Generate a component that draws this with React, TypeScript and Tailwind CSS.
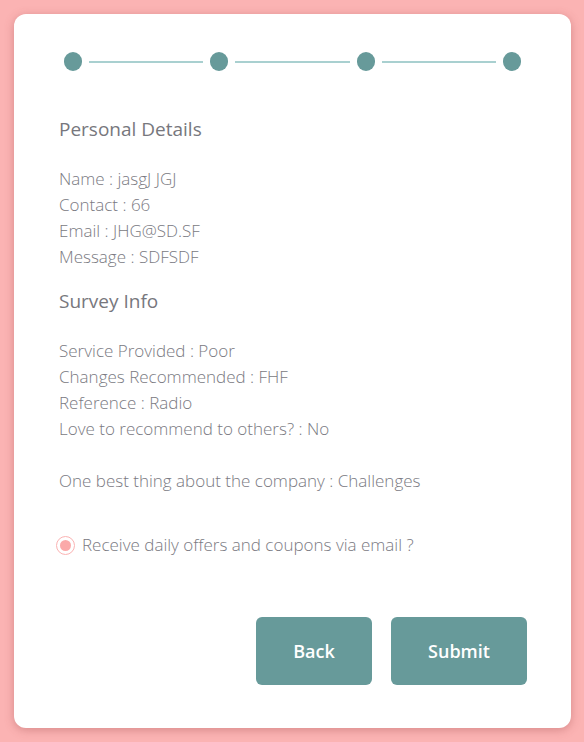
const font = { fontFamily: "'Open Sans', Lato, sans-serif" };

function Steps() {
  return (
    <div className="flex items-center px-[50px]">
      <span className="h-[19px] w-[18px] shrink-0 rounded-full bg-[#679a9a]" />
      <span className="mx-[7px] h-[2px] flex-1 bg-[#a9d0d0]" />
      <span className="h-[19px] w-[18px] shrink-0 rounded-full bg-[#679a9a]" />
      <span className="mx-[7px] h-[2px] flex-1 bg-[#a9d0d0]" />
      <span className="h-[19px] w-[18px] shrink-0 rounded-full bg-[#679a9a]" />
      <span className="mx-[7px] h-[2px] flex-1 bg-[#a9d0d0]" />
      <span className="h-[19px] w-[18px] shrink-0 rounded-full bg-[#679a9a]" />
    </div>
  );
}

export default function App() {
  return (
    <div className="min-h-[742px] bg-[#fbb3b3] p-[14px]" style={font}>
      <div className="flex h-[714px] w-[557px] flex-col rounded-[12px] bg-white pt-[38px] shadow-[0_2px_10px_rgba(150,60,60,0.35)]">
        <Steps />
        <div className="px-[45px] pt-[45px] text-[17px] leading-[26px] text-[#7a7a82]">
          <h2 className="text-[19px] font-normal text-[#77777d]">Personal Details</h2>
          <div className="mt-[24px] font-light">
            <p>Name : jasgJ JGJ</p>
            <p>Contact : 66</p>
            <p>Email : JHG@SD.SF</p>
            <p>Message : SDFSDF</p>
          </div>
          <h2 className="mt-[18px] text-[19px] font-normal text-[#77777d]">Survey Info</h2>
          <div className="mt-[24px] font-light">
            <p>Service Provided : Poor</p>
            <p>Changes Recommended : FHF</p>
            <p>Reference : Radio</p>
            <p>Love to recommend to others? : No</p>
            <p className="mt-[26px]">One best thing about the company : Challenges</p>
          </div>
          <label className="mt-[38px] -ml-[3px] flex items-center gap-[7px] font-light">
            <span className="flex h-[19px] w-[19px] items-center justify-center rounded-full border border-[#fbb3b3]">
              <span className="h-[11px] w-[11px] rounded-full bg-[#fba9a9]" />
            </span>
            Receive daily offers and coupons via email ?
          </label>
        </div>
        <div className="mt-[59px] flex justify-end gap-[19px] pr-[44px]">
          <button className="h-[68px] w-[116px] rounded-[6px] bg-[#679a9a] text-[18px] font-semibold text-white">
            Back
          </button>
          <button className="h-[68px] w-[136px] rounded-[6px] bg-[#679a9a] text-[18px] font-semibold text-white">
            Submit
          </button>
        </div>
      </div>
    </div>
  );
}
